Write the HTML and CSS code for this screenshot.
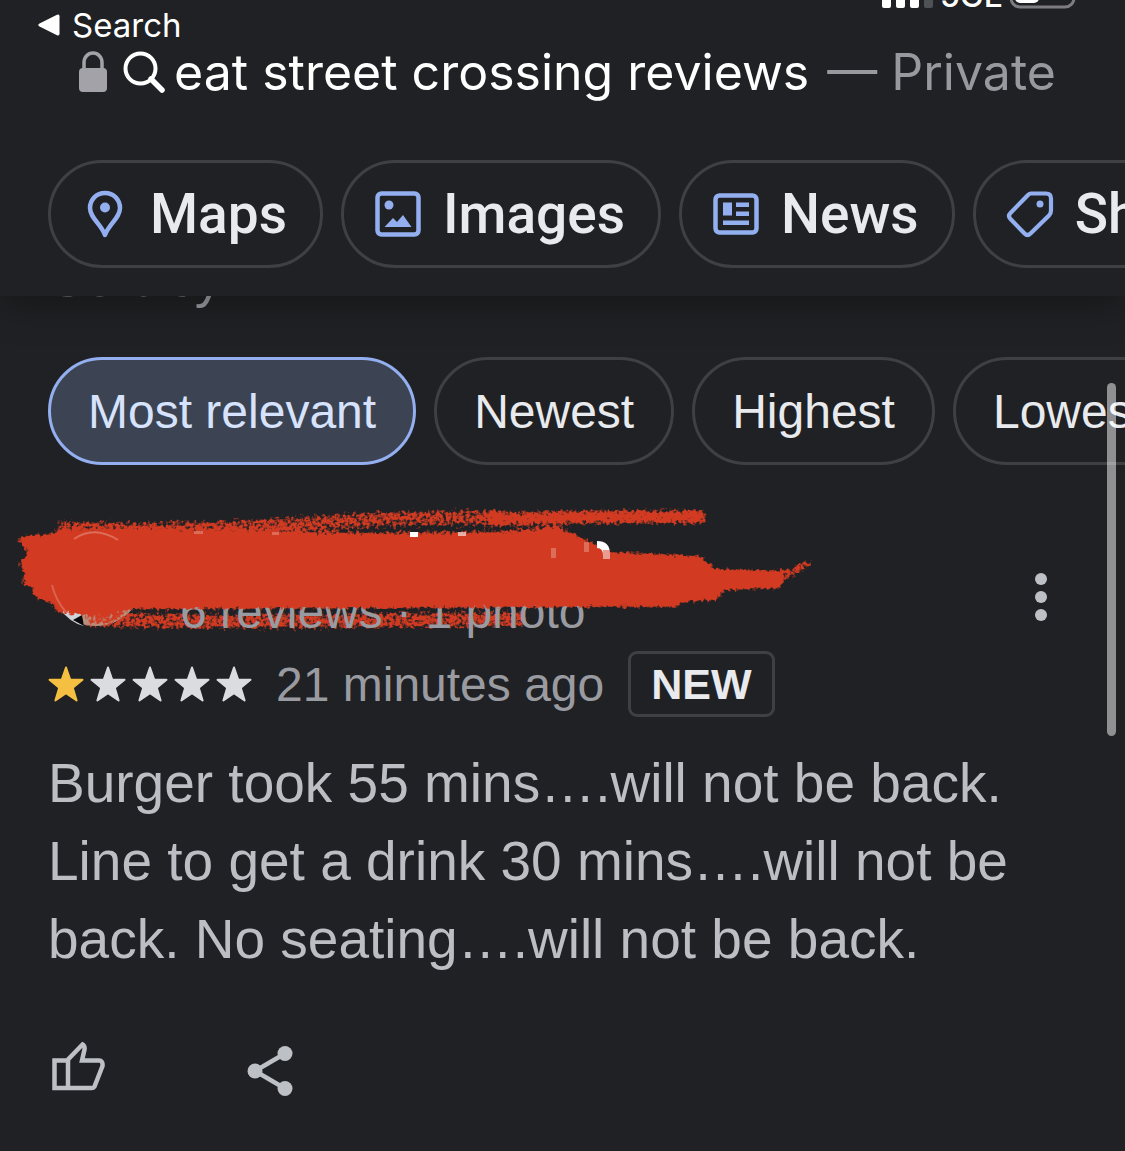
FILE: index.html
```html
<!DOCTYPE html>
<html lang="en">
<head>
    <meta charset="UTF-8">
    <meta name="viewport" content="width=device-width, initial-scale=1.0">
    <title>eat street crossing reviews</title>
    <link rel="stylesheet" href="styles.css">
</head>
<body>
    <header class="top">
        <div class="status-bar">
            <svg class="signal" width="52" height="30" viewBox="0 0 52 30">
                <rect x="1" y="18" width="9" height="12" rx="2" fill="#fff"/>
                <rect x="15" y="12" width="9" height="18" rx="2" fill="#fff"/>
                <rect x="29" y="6" width="9" height="24" rx="2" fill="#fff"/>
                <rect x="43" y="0" width="9" height="30" rx="2" fill="#505155"/>
            </svg>
            <span class="network">5GE</span>
            <svg class="battery" width="68" height="34" viewBox="0 0 68 34">
                <rect x="2" y="2" width="63" height="30" rx="9" fill="none" stroke="#7c7c81" stroke-width="3"/>
                <rect x="6" y="6" width="24" height="22" rx="5" fill="#fff"/>
            </svg>
        </div>

        <a class="back" href="#">
            <svg width="22" height="22" viewBox="0 0 22 22"><path d="M1.500 9.500 19 .8q2.500-1 2.500 1.500v17.400q0 2.500-2.500 1.500L1.500 12.500q-2.500-1.500 0-3z" fill="#fff"/></svg>
            Search
        </a>

        <div class="address">
            <svg class="lock" width="30" height="42" viewBox="0 0 30 42">
                <path d="M6 19v-7.500a9 9.500 0 0 1 18 0V19" fill="none" stroke="#a3a2a8" stroke-width="3.500"/>
                <rect x="1" y="17" width="28" height="24" rx="4" fill="#a3a2a8"/>
            </svg>
            <svg class="glass" width="42" height="42" viewBox="0 0 42 42">
                <circle cx="17.500" cy="17.500" r="15" fill="none" stroke="#fff" stroke-width="4"/>
                <path d="M28 28 39 39" stroke="#fff" stroke-width="5.500" stroke-linecap="round"/>
            </svg>
            <span class="query">eat street crossing reviews</span>
            <span class="private">— Private</span>
        </div>

        <nav class="chips tabs">
            <a class="chip" href="#">
                <svg width="48" height="48" viewBox="0 0 48 48">
                    <path d="M24 3c-8.600 0-15 6.500-15 15C9 28 20 34 24 45c4-11 15-17 15-27 0-8.500-6.400-15-15-15z" fill="none" stroke="#93aff0" stroke-width="4.500" stroke-linejoin="round"/>
                    <circle cx="24" cy="17.500" r="5" fill="#93aff0"/>
                </svg>
                Maps
            </a>
            <a class="chip" href="#">
                <svg width="48" height="48" viewBox="0 0 48 48">
                    <rect x="3.500" y="3.500" width="41" height="41" rx="4" fill="none" stroke="#93aff0" stroke-width="4.500"/>
                    <circle cx="15" cy="15" r="4.500" fill="#93aff0"/>
                    <path d="M10.500 37 19 28l4 4 6-7 8.500 12z" fill="#93aff0"/>
                </svg>
                Images
            </a>
            <a class="chip" href="#">
                <svg width="48" height="48" viewBox="0 0 48 48">
                    <rect x="3.500" y="5.500" width="41" height="37" rx="4" fill="none" stroke="#93aff0" stroke-width="4.500"/>
                    <path d="M11 12.500h9v13h-9zM24 12.500h13v4.500H24zM24 21.500h13v4.500H24zM11 30.500h26v4.500H11z" fill="#93aff0"/>
                </svg>
                News
            </a>
            <a class="chip" href="#">
                <svg width="48" height="48" viewBox="0 0 48 48">
                    <path d="M25 3.500h15q5 0 5 5v12q0 3-2 5L24.500 43.500q-3 3-6 0L4.500 29q-3-3 0-6L22 5Q23.500 3.500 25 3.500z" fill="none" stroke="#93aff0" stroke-width="4.200"/>
                    <circle cx="34" cy="14" r="3.500" fill="#93aff0"/>
                </svg>
                Shopping
            </a>
        </nav>
    </header>

    <main>
        <p class="sort-label">Sort by</p>
        <div class="chips sort">
            <button class="chip active" type="button">Most relevant</button>
            <button class="chip" type="button">Newest</button>
            <button class="chip" type="button">Highest</button>
            <button class="chip" type="button">Lowest</button>
        </div>

        <article class="review">
            <div class="author">
                <svg class="avatar" width="96" height="96" viewBox="0 0 96 96">
                    <circle cx="48" cy="48" r="47" fill="#b98f7c"/>
                    <path d="M10 76Q22 92 36 95L34 84z" fill="#cfd3da"/>
                    <path d="M25 89 34 84 36 95z" fill="#08090b"/>
                </svg>
                <p class="counts">6 reviews · 1 photo</p>
                <button class="more" type="button" aria-label="More options">
                    <svg width="12" height="48" viewBox="0 0 12 48" fill="#bdc1c6">
                        <circle cx="6" cy="6" r="6"/><circle cx="6" cy="24" r="6"/><circle cx="6" cy="42" r="6"/>
                    </svg>
                </button>

                <svg class="marker marker-under" width="840" height="150" viewBox="0 500 840 150">
                    <defs>
                        <!-- turns soft stroke edges into crayon grain -->
                        <filter id="crayon" filterUnits="userSpaceOnUse" x="0" y="490" width="840" height="160" color-interpolation-filters="sRGB">
                            <feTurbulence type="fractalNoise" baseFrequency="0.3" numOctaves="2" seed="7" result="noise"/>
                            <feGaussianBlur in="SourceAlpha" stdDeviation="3" result="soft"/>
                            <feComposite in="soft" in2="noise" operator="arithmetic" k1="0" k2="4.500" k3="3.500" k4="-3.500" result="grain"/>
                            <feFlood flood-color="#d23b22"/>
                            <feComposite in2="grain" operator="in"/>
                        </filter>
                    </defs>
                    <g filter="url(#crayon)" fill="none" stroke="#000">
                        <path d="M84 619Q180 622 300 621T528 619" stroke-width="18" stroke-opacity=".6"/>
                    </g>
                </svg>

                <svg class="marker" width="840" height="150" viewBox="0 500 840 150">
                    <g filter="url(#crayon)">
                        <path d="M56 528Q200 532 300 524T500 518" fill="none" stroke="#000" stroke-width="18" stroke-opacity=".58"/>
                        <path d="M490 519Q600 516 706 517" fill="none" stroke="#000" stroke-width="15" stroke-opacity=".75"/>
                        <path d="M776 577 795 571 811 561" fill="none" stroke="#000" stroke-width="12" stroke-opacity=".6"/>
                        <path d="M86 618 126 619" fill="none" stroke="#000" stroke-width="18" stroke-opacity=".55"/>
                        <path d="M15 537 60 533 130 531 300 534 500 532 560 528 590 542 612 552 700 556 715 569 782 571 783 588 722 590 720 600 680 602 678 607 560 607 400 608 130 609 100 614 70 614 56 612 54 604 32 596 34 588 20 582 26 573 17 562 30 554z"/>
                    </g>
                    <g fill="#fff">
                        <path d="M410 532h8v5h-8z"/>
                        <path d="M458 532h8v4h-8z" opacity=".6"/>
                        <path d="M194 531h9v3h-9zM272 532h7v3h-7zM584 542h5v10h-5zM551 548h5v10h-5z" opacity=".25"/>
                        <path d="M597 541q13 0 13 13v5h-7v-4q0-7-6-7z"/>
                        <path d="M603 550h7v9h-7z" fill="#d23b22" opacity=".5"/>
                        <path d="M74 539q20-14 44 1" fill="none" stroke="#fff" stroke-width="2" opacity=".25"/>
                        <path d="M52 585q4 16 14 27" fill="none" stroke="#fff" stroke-width="2" opacity=".2"/>
                    </g>
                </svg>
            </div>

            <div class="meta">
                <svg class="stars" width="204" height="36" viewBox="0 0 204 36" role="img" aria-label="1 out of 5 stars">
                    <defs>
                        <path id="star" d="M18 1.500 22.200 13.500 34.500 13.800 24.800 21.700 28.600 34.500 18 27.200 7.400 34.500 11.200 21.700 1.500 13.800 13.800 13.500z" stroke-width="2" stroke-linejoin="round"/>
                    </defs>
                    <use href="#star" fill="#f5bf42" stroke="#f5bf42"/>
                    <g fill="#dadce0" stroke="#dadce0">
                        <use href="#star" x="42"/><use href="#star" x="84"/><use href="#star" x="126"/><use href="#star" x="168"/>
                    </g>
                </svg>
                <span class="time">21 minutes ago</span>
                <span class="badge">NEW</span>
            </div>

            <p class="text">Burger took 55 mins….will not be back. Line to get a drink 30 mins….will not be back. No seating….will not be back.</p>

            <div class="actions">
                <button type="button" aria-label="Like">
                    <svg width="54" height="54" viewBox="0 0 54 54" fill="none" stroke="#bdc1c6" stroke-width="4.500">
                        <path d="M3.500 21.500H16L31.500 5.500q2.500 1.500 2 5l-2.500 11h17q4 0 3.500 5.500l-8 20.500q-1 1.500-3 1.500h-37z"/>
                        <path d="M17 21v28"/>
                    </svg>
                </button>
                <button type="button" aria-label="Share">
                    <svg width="54" height="58" viewBox="0 0 54 58" fill="#bdc1c6">
                        <path d="M42 14.500 12 32l30 17.500" fill="none" stroke="#bdc1c6" stroke-width="4.500"/>
                        <circle cx="42" cy="14.500" r="7.500"/><circle cx="12" cy="32" r="7.500"/><circle cx="42" cy="49.500" r="7.500"/>
                    </svg>
                </button>
            </div>
        </article>
    </main>

    <div class="scroll-thumb"></div>
</body>
</html>
```

FILE: styles.css
```css
:root {
    --bg: #202124;
    --line: #3f4043;
    --blue: #93aff0;
    --muted: #9a9ba1;
}

* {
    box-sizing: border-box;
}

body {
    margin: 0;
    background: var(--bg);
    color: #e8eaed;
    font-family: "Liberation Sans", Arial, sans-serif;
    font-size: 48px;
    overflow-x: hidden;
}

a {
    color: inherit;
    text-decoration: none;
}

p {
    margin: 0;
}

button {
    padding: 0;
    border: 0;
    background: none;
    color: inherit;
    font: inherit;
    cursor: pointer;
}

svg {
    display: block;
    flex: none;
}

.top {
    position: relative;
    z-index: 1;
    padding-bottom: 28px;
    background: var(--bg);
    box-shadow: 0 6px 36px rgba(0, 0, 0, 0.35);
}

.status-bar {
    display: flex;
    justify-content: flex-end;
    align-items: flex-end;
    height: 9px;
    padding-right: 48px;
    overflow: hidden;
}

.signal {
    margin-bottom: 1px;
}

.network {
    margin: 0 6px 0 7px;
    color: #fff;
    font: 500 32px/26px Inter, sans-serif;
}

.back {
    display: flex;
    align-items: center;
    gap: 12px;
    height: 32px;
    padding-left: 38px;
    color: #fff;
    font: 33px Inter, sans-serif;
}

.address {
    display: flex;
    align-items: center;
    height: 62px;
    margin-bottom: 57px;
    padding-left: 78px;
    font: 50px Inter, sans-serif;
    white-space: nowrap;
}

.glass {
    margin: 0 9px 0 15px;
}

.query {
    margin-right: 18px;
    color: #fff;
}

.private {
    color: #98989f;
}

.chips {
    display: flex;
    gap: 18px;
    padding-left: 48px;
    overflow: hidden;
}

.chip {
    display: flex;
    flex: none;
    align-items: center;
    height: 108px;
    padding: 0 37px;
    border: 3px solid var(--line);
    border-radius: 54px;
    white-space: nowrap;
}

.tabs .chip {
    gap: 21px;
    padding: 0 33px 0 30px;
    font: 500 55px Roboto, sans-serif;
}

.chip.active {
    border-color: var(--blue);
    background: #3c4454;
    color: #d7e3fc;
}

.sort-label {
    height: 80px;
    margin-top: -19px;
    padding-left: 48px;
    color: var(--muted);
    font-size: 55px;
    line-height: 0;
}

.review {
    padding: 65px 48px 0;
}

.author {
    position: relative;
    display: flex;
    align-items: flex-end;
    gap: 36px;
    height: 97px;
}

.counts {
    flex: 1;
    color: var(--muted);
    line-height: 30px;
}

.more {
    position: relative;
    z-index: 2;
    align-self: center;
    padding: 0 30px;
    margin-top: 36px;
}

.marker {
    position: absolute;
    top: -30px;
    left: -48px;
    pointer-events: none;
}

.marker-under {
    z-index: -1;
}

.meta {
    display: flex;
    align-items: center;
    gap: 24px;
    margin-top: 24px;
    color: var(--muted);
}

.badge {
    padding: 0 20px;
    border: 3px solid var(--line);
    border-radius: 9px;
    color: #e8eaed;
    font-size: 43px;
    font-weight: bold;
    line-height: 60px;
}

.text {
    margin-top: 27px;
    color: #bdbec4;
    font-size: 55px;
    line-height: 78px;
}

.actions {
    display: flex;
    align-items: flex-start;
    gap: 138px;
    padding: 61px 3px 48px;
}

.scroll-thumb {
    position: fixed;
    top: 383px;
    right: 9px;
    width: 9px;
    height: 353px;
    border-radius: 5px;
    background: rgba(255, 255, 255, 0.5);
}
```
